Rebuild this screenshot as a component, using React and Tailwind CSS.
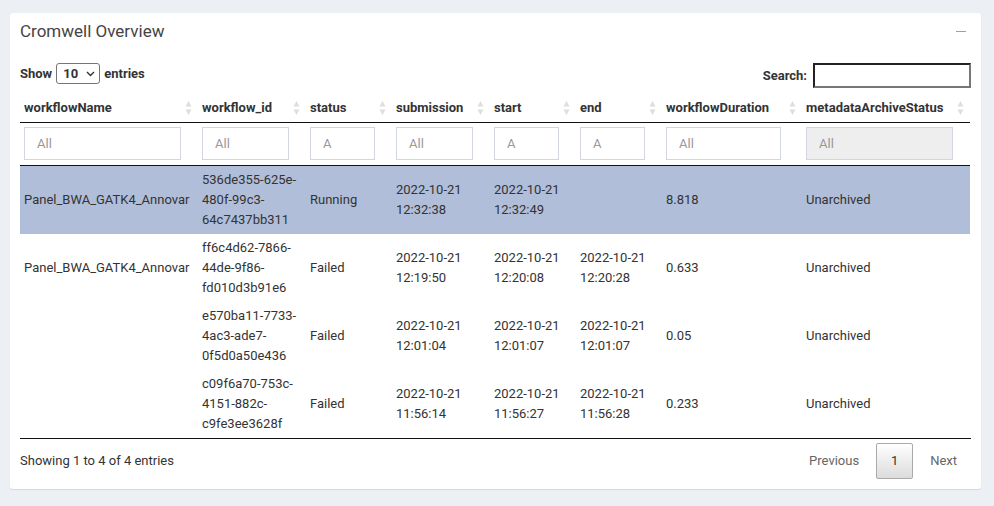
import React from "react";

const cols = [
  { key: "workflowName", w: "w-[178px]", inp: "w-[157px]", ph: "All" },
  { key: "workflow_id", w: "w-[108px]", inp: "w-[87px]", ph: "All" },
  { key: "status", w: "w-[86px]", inp: "w-[65px]", ph: "A" },
  { key: "submission", w: "w-[98px]", inp: "w-[77px]", ph: "All" },
  { key: "start", w: "w-[86px]", inp: "w-[65px]", ph: "A" },
  { key: "end", w: "w-[86px]", inp: "w-[65px]", ph: "A" },
  { key: "workflowDuration", w: "w-[140px]", inp: "w-[115px]", ph: "All" },
  { key: "metadataArchiveStatus", w: "w-[168px]", inp: "w-[147px]", ph: "All" },
];

const rows = [
  {
    name: "Panel_BWA_GATK4_Annovar",
    id: ["536de355-625e-", "480f-99c3-", "64c7437bb311"],
    status: "Running",
    sub: ["2022-10-21", "12:32:38"],
    start: ["2022-10-21", "12:32:49"],
    end: null,
    dur: "8.818",
    arch: "Unarchived",
    sel: true,
  },
  {
    name: "Panel_BWA_GATK4_Annovar",
    id: ["ff6c4d62-7866-", "44de-9f86-", "fd010d3b91e6"],
    status: "Failed",
    sub: ["2022-10-21", "12:19:50"],
    start: ["2022-10-21", "12:20:08"],
    end: ["2022-10-21", "12:20:28"],
    dur: "0.633",
    arch: "Unarchived",
  },
  {
    name: "",
    id: ["e570ba11-7733-", "4ac3-ade7-", "0f5d0a50e436"],
    status: "Failed",
    sub: ["2022-10-21", "12:01:04"],
    start: ["2022-10-21", "12:01:07"],
    end: ["2022-10-21", "12:01:07"],
    dur: "0.05",
    arch: "Unarchived",
  },
  {
    name: "",
    id: ["c09f6a70-753c-", "4151-882c-", "c9fe3ee3628f"],
    status: "Failed",
    sub: ["2022-10-21", "11:56:14"],
    start: ["2022-10-21", "11:56:27"],
    end: ["2022-10-21", "11:56:28"],
    dur: "0.233",
    arch: "Unarchived",
  },
];

function SortIcon() {
  return (
    <svg width="7" height="16" viewBox="0 0 7 16" className="shrink-0">
      <path d="M3.5 1 L6.5 6.5 L0.5 6.5 Z" fill="#dedede" />
      <path d="M3.5 15 L6.5 9.5 L0.5 9.5 Z" fill="#dedede" />
    </svg>
  );
}

function Lines({ v }) {
  if (!v) return null;
  return (
    <>
      {v.map((l, i) => (
        <div key={i} className="whitespace-nowrap">
          {l}
        </div>
      ))}
    </>
  );
}

const td = "px-[4px] py-[4px] align-middle whitespace-nowrap overflow-visible";

export default function App() {
  return (
    <div
      className="w-[994px] h-[506px] bg-[#ecf0f5] pt-[13px] pl-[10px] text-[#333] text-[13px] leading-[20px]"
      style={{ fontFamily: "Roboto, 'Liberation Sans', sans-serif" }}
    >
      <div className="w-[971px] h-[476px] bg-white rounded-[3px] shadow-[0_1px_1px_rgba(0,0,0,0.1)]">
        <div className="flex items-start justify-between pl-[10px] pr-[15px] h-[40px] pt-[8px]">
          <h3 className="text-[17px] leading-[20px] text-[#444]">Cromwell Overview</h3>
          <div className="h-[20px] flex items-center">
            <div className="w-[10px] h-[1px] bg-[#97a0b3]" />
          </div>
        </div>
        <div className="px-[10px] pt-[10px]">
          <div className="flex items-start justify-between h-[25px]">
            <div className="flex items-center h-[21px] font-bold text-[13px]">
              <span>Show</span>
              <div className="mx-[4px] w-[44px] h-[21px] border border-[#767676] rounded-[3px] flex items-center justify-between pl-[6px] pr-[4px] bg-white">
                <span className="text-[13px]">10</span>
                <svg width="9" height="6" viewBox="0 0 9 6">
                  <path d="M1 1 L4.5 4.5 L8 1" fill="none" stroke="#333" strokeWidth="1.4" />
                </svg>
              </div>
              <span>entries</span>
            </div>
            <div className="flex items-center font-bold text-[13px]">
              <span className="mr-[6px]">Search:</span>
              <div className="w-[158px] h-[25px] border-2 border-t-[#222] border-l-[#222] border-b-[#777] border-r-[#777] bg-white" />
            </div>
          </div>
          <table className="mt-[6px] w-[950px] table-fixed border-collapse">
            <thead>
              <tr>
                {cols.map((c) => (
                  <th
                    key={c.key}
                    className={`${c.w} pl-[4px] pr-[6px] py-[4px] text-left font-bold text-[13px] border-b border-[#111]`}
                  >
                    <div className="flex items-center justify-between">
                      <span className="whitespace-nowrap">{c.key}</span>
                      <SortIcon />
                    </div>
                  </th>
                ))}
              </tr>
              <tr>
                {cols.map((c, i) => (
                  <td key={c.key} className="pl-[4px] pt-[4px] pb-[5px] border-b border-[#111]">
                    <div
                      className={`${c.inp} h-[33px] border border-[#d2d6de] flex items-center pl-[12px] text-[#999] text-[13px] overflow-hidden ${
                        i === 7 ? "bg-[#eeeeee]" : "bg-white"
                      }`}
                    >
                      {c.ph}
                    </div>
                  </td>
                ))}
              </tr>
            </thead>
            <tbody>
              {rows.map((r, i) => (
                <tr key={i} className={r.sel ? "bg-[#b0bed9]" : "bg-white"}>
                  <td className={td}>{r.name}</td>
                  <td className={td}>
                    <Lines v={r.id} />
                  </td>
                  <td className={td}>{r.status}</td>
                  <td className={td}>
                    <Lines v={r.sub} />
                  </td>
                  <td className={td}>
                    <Lines v={r.start} />
                  </td>
                  <td className={td}>
                    <Lines v={r.end} />
                  </td>
                  <td className={td}>{r.dur}</td>
                  <td className={td}>{r.arch}</td>
                </tr>
              ))}
            </tbody>
          </table>
          <div className="border-t border-[#111] flex items-center justify-between pt-[4px]">
            <span>Showing 1 to 4 of 4 entries</span>
            <div className="flex items-center text-[#666]">
              <span className="pr-[17px]">Previous</span>
              <div className="w-[37px] h-[36px] border border-[#aaa] rounded-[2px] bg-gradient-to-b from-white to-[#dcdcdc] flex items-center justify-center text-[#333]">
                1
              </div>
              <span className="pl-[17px] pr-[14px]">Next</span>
            </div>
          </div>
        </div>
      </div>
    </div>
  );
}
